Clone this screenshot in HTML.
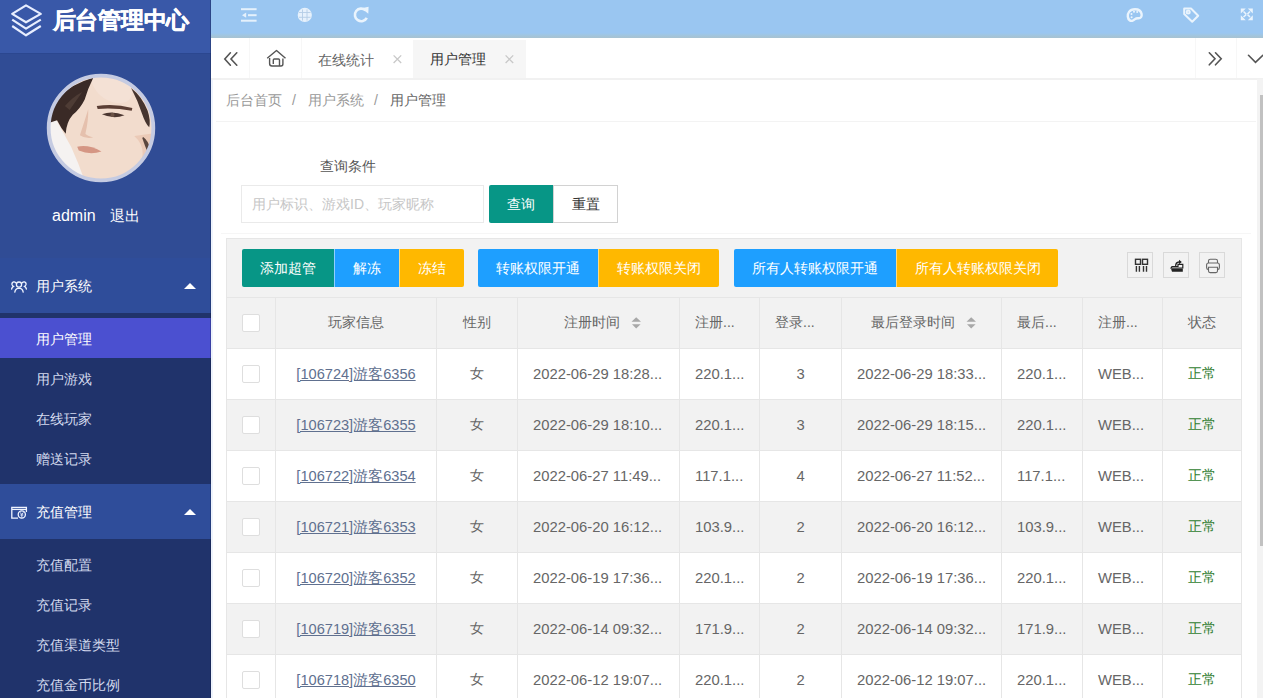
<!DOCTYPE html>
<html><head><meta charset="utf-8">
<style>
*{margin:0;padding:0;box-sizing:border-box}
html,body{width:1263px;height:698px;overflow:hidden;background:#fff;font-family:"Liberation Sans",sans-serif;font-size:14px;color:#666}
.abs{position:absolute}
#side{position:absolute;left:0;top:0;width:211px;height:698px;background:#304c95;overflow:hidden}
#logo{position:absolute;left:0;top:0;width:211px;height:54px;background:#3958a8;border-bottom:1px solid #2b4790}
#logo .t{position:absolute;left:52.5px;top:5px;letter-spacing:-0.25px;-webkit-text-stroke:0.5px #fff;font-size:22.5px;font-weight:bold;color:#fff;line-height:32px;white-space:nowrap}
#avatar{position:absolute;left:46px;top:73px;width:110px;height:110px}
#user{position:absolute;left:52px;top:206px;color:#fff;font-size:15px;line-height:20px;white-space:nowrap}
.grp{position:absolute;left:0;width:211px;height:55px;background:#2f4d9a;color:#fff}
.grp .t{position:absolute;left:36px;top:18px;line-height:20px;font-size:14px}
.grp .tri{position:absolute;left:184px;width:0;height:0;border-left:6px solid transparent;border-right:6px solid transparent;border-bottom:6px solid #fff}
.sub{position:absolute;left:0;width:211px;background:#20336b}
.item{position:absolute;left:0;width:211px;height:40px;color:#d3daee;line-height:42px;padding-left:36px;font-size:14px}
.item.on{background:#4b50d0;color:#fff}
#top{position:absolute;left:211px;top:0;width:1052px;height:38px;background:linear-gradient(to bottom,#9ac6f1 0,#9ac6f1 33px,#a0c6e2 35px,#a6c3d4 37px,#a6c3d4 38px)}
#tabs{position:absolute;left:211px;top:38px;width:1052px;height:42px;background:#fff;border-bottom:2px solid #f1f1f1}
.sep{position:absolute;top:0;width:1px;height:40px;background:#f7f7f7}
#crumb{position:absolute;left:226px;top:90px;line-height:20px;font-size:14px;color:#999;white-space:nowrap}
#crumbline{position:absolute;left:216px;top:121px;width:1040px;height:1px;background:#f3f3f3}
.btn{position:absolute;height:38px;line-height:38px;color:#fff;text-align:center;font-size:14px;white-space:nowrap}
.teal{background:#079686}.blue{background:#1E9FFF}.orange{background:#FFB800}
table{position:absolute;left:226px;top:297px;width:1016px;border-collapse:collapse;table-layout:fixed}
td,th{border:1px solid #e6e6e6;height:51px;font-weight:normal;white-space:nowrap;overflow:hidden;font-size:14px;color:#666;padding:0 15px}
th{background:#f2f2f2}
tr.g td{background:#f2f2f2}
.cb{display:inline-block;width:18px;height:18px;border:1px solid #dedede;border-radius:2px;background:#fff;vertical-align:middle}
.c{text-align:center}
.lnk{color:#60708f;text-decoration:underline;font-size:14.6px}
.num{font-size:14.8px}
.ok{color:#2f7d2f}
.ico{position:absolute;width:26px;height:26px;border:1px solid #d9d9d9;background:#f2f2f2}
#sb{position:absolute;left:1257px;top:79px;width:6px;height:619px;background:#f3f3f3}
#sbt{position:absolute;left:1260px;top:95px;width:3px;height:451px;background:#c1c1c1}
</style></head><body>
<div id="side">
  <div id="logo">
    <svg class="abs" style="left:10px;top:3px" width="34" height="36" viewBox="0 0 34 36" fill="none" stroke="#e8eeff" stroke-width="2.2" stroke-linejoin="round">
      <path d="M2.2 10.9 L16 2.4 L30.8 10.9 L16 19.3 Z"/>
      <path d="M2.2 16.6 L16 25.6 L30.8 16.6"/>
      <path d="M2.2 23 L16 32.3 L30.8 23"/>
    </svg>
    <div class="t">后台管理中心</div>
  </div>
  <div id="avatar"><svg width="110" height="110" viewBox="0 0 698 698">
<defs><clipPath id="cp"><circle cx="349" cy="349" r="335"/></clipPath></defs>
<g clip-path="url(#cp)">
<rect width="698" height="698" fill="#f2dccd"/>
<path d="M280 30 Q420 10 545 90 Q560 200 450 190 Q320 170 280 30 Z" fill="#f5e3d8" opacity="0.7"/>
<path d="M560 400 Q640 470 600 580 Q540 650 420 698 L698 698 L698 380 Z" fill="#ebcab7"/>
<path d="M0 240 L50 270 Q110 380 160 470 Q210 580 250 698 L0 698 Z" fill="#f5f2f1"/>
<path d="M10 320 Q40 220 90 150 Q160 70 300 30 Q265 100 245 170 Q215 230 170 265 Q130 310 125 385 Q95 350 70 300 Z" fill="#3a2a26"/>
<path d="M120 210 Q170 150 230 120 Q195 170 150 235 Z" fill="#4e3c35"/>
<path d="M540 95 Q610 150 645 240 Q665 300 655 345 Q630 320 610 260 Q585 180 540 95 Z" fill="#46352f"/>
<path d="M615 405 Q650 430 665 490 L645 505 Q625 455 612 415 Z" fill="#5a463e"/>
<path d="M322 210 Q430 192 548 222 L544 240 Q430 218 328 228 Z" fill="#5b3e34"/>
<path d="M355 262 Q420 236 498 268 Q430 296 355 262 Z" fill="#4c3731"/>
<circle cx="422" cy="266" r="13" fill="#6b5246"/>
<path d="M268 230 Q240 320 215 395 Q250 420 300 410 Q255 395 250 385 Q270 300 268 230 Z" fill="#e5c0ad"/>
<path d="M198 468 Q270 452 352 498 Q280 522 208 492 Z" fill="#d59684"/>
</g>
<circle cx="349" cy="349" r="332" fill="none" stroke="#c5cbe2" stroke-width="24"/>
</svg></div>
  <div id="user"><span style="font-size:16px">admin</span><span class="abs" style="left:58px;top:0">退出</span></div>

  <div class="grp" style="top:258px">
    <svg class="abs" style="left:0;top:0" width="40" height="55" viewBox="0 258 40 55"><g fill="none" stroke="#f0f4ff" stroke-width="1.3" stroke-linecap="round"><circle cx="19" cy="284.6" r="2.6"/><path d="M14.8 292.2 Q15.5 288.3 19 288.2 Q22.5 288.3 23.2 292.2"/><path d="M15.8 282.7 Q14.8 281.7 13.6 281.9 Q11.6 282.4 12 284.7 Q12.3 286 13.4 286.4 Q12 287.3 11.6 289"/><path d="M22.2 282.7 Q23.2 281.7 24.4 281.9 Q26.4 282.4 26 284.7 Q25.7 286 24.6 286.4 Q26 287.3 26.4 289"/></g></svg>
    <div class="t">用户系统</div><div class="tri" style="top:25px"></div>
  </div>
  <div class="sub" style="top:313px;height:171px">
    <div class="item on" style="top:5px">用户管理</div>
    <div class="item" style="top:45px">用户游戏</div>
    <div class="item" style="top:85px">在线玩家</div>
    <div class="item" style="top:125px">赠送记录</div>
  </div>
  <div class="grp" style="top:484px">
    <svg class="abs" style="left:0;top:0" width="40" height="55" viewBox="0 484 40 55"><g fill="none" stroke="#f0f4ff" stroke-width="1.3"><path d="M18 518.2 H11.8 V507.3 H26.4 V512"/><path d="M12 509.4 H26.3"/><circle cx="21.8" cy="514.4" r="3.6"/><path d="M20.2 512.4 L21.8 514.6 L23.4 512.4 M21.8 514.6 V517 M20.3 515 H23.3" stroke-width="0.9"/></g></svg>
    <div class="t">充值管理</div><div class="tri" style="top:25px"></div>
  </div>
  <div class="sub" style="top:539px;height:170px">
    <div class="item" style="top:5px">充值配置</div>
    <div class="item" style="top:45px">充值记录</div>
    <div class="item" style="top:85px">充值渠道类型</div>
    <div class="item" style="top:125px">充值金币比例</div>
  </div>
</div>

<div class="abs" style="left:209.5px;top:0;width:1.5px;height:698px;background:rgba(10,20,50,0.28)"></div>
<div id="top">
<svg class="abs" style="left:0;top:0" width="1052" height="38" viewBox="211 0 1052 38">
<g fill="#eaf4fd" opacity="0.95">
<rect x="241" y="8.2" width="15.6" height="2"/>
<rect x="248" y="14.2" width="8.6" height="2"/>
<path d="M242 15.2 L246.2 12.6 L246.2 17.8 Z"/>
<rect x="241" y="19.7" width="15.6" height="2"/>
</g>
<g>
<circle cx="304.8" cy="14.9" r="7.1" fill="#e6f1fc"/>
<g stroke="#b4cde6" stroke-width="0.9" fill="none"><path d="M299 12.5 H310.5 M299 17.3 H310.5 M302.5 9.5 V20.5 M307 9.5 V20.5"/></g>
</g>
<g fill="none" stroke="#eaf4fd" stroke-width="2.6">
<path d="M366.8 17.8 A6.3 6.3 0 1 1 365.5 10.3"/>
</g>
<path d="M361.5 8.2 L368.6 6.8 L368.3 13.8 Z" fill="#eaf4fd"/>
<g fill="none" stroke="#eaf4fd" stroke-width="2.4">
<path d="M1135 9.2 C1129 9.2 1127.5 14 1127.8 16.5 C1128.2 20.5 1131 21.5 1133 20.5 C1135 19.5 1135.5 18 1138 18.2 C1141 18.4 1142 16.5 1141.6 14 C1141 10.5 1138.5 9.2 1135 9.2 Z"/>
</g>
<g fill="#eaf4fd"><circle cx="1131.5" cy="14" r="1"/><circle cx="1134" cy="11.8" r="1"/><circle cx="1137.2" cy="12" r="1"/><circle cx="1131.6" cy="17.3" r="1"/></g>
<g fill="none" stroke="#eaf4fd" stroke-width="2" stroke-linejoin="round">
<path d="M1184.2 8.5 L1191 8.5 L1198.2 15.7 L1192.2 21.7 L1184.2 14 Z"/>
<circle cx="1188.2" cy="12.1" r="1.5"/>
</g>
<g fill="none" stroke="#eaf4fd" stroke-width="1.6"><path d="M1243.5 11.5 L1246.3 14.3 M1250 11.5 L1247.5 14 M1243.5 17 L1246.3 14.5 M1250 17 L1247.5 14.5"/></g>
<g fill="#eaf4fd"><path d="M1240.8 8.4 H1245.8 L1240.8 13.4 Z M1252.8 8.4 H1247.8 L1252.8 13.4 Z M1240.8 20.2 H1245.8 L1240.8 15.2 Z M1252.8 20.2 H1247.8 L1252.8 15.2 Z"/></g>
</svg>
</div>
<div id="tabs">
  <div class="sep" style="left:38px"></div>
  <div class="sep" style="left:90px"></div>
  <div class="abs" style="left:202px;top:2px;width:113px;height:38px;background:#f6f6f6"></div>
  <div class="sep" style="left:984px"></div>
  <div class="sep" style="left:1025px"></div>
  <div class="abs" style="left:107px;top:12px;line-height:20px;color:#666">在线统计</div>
<svg class="abs" style="left:0;top:0" width="1052" height="40" viewBox="211 38 1052 40">
<g fill="none" stroke="#555" stroke-width="1.6" stroke-linecap="round" stroke-linejoin="miter">
<path d="M230.4 52.8 L224.8 59 L230.4 65.2 M236.8 52.8 L231 59 L236.8 65.2"/>
<path d="M1209.3 52.8 L1215 58.8 L1209.3 64.8 M1215.5 52.8 L1221.2 58.8 L1215.5 64.8"/>
<path d="M1248.5 55.3 L1255.5 62.3 L1262.8 55.3"/>
</g>
<g fill="none" stroke="#555" stroke-width="1.4" stroke-linejoin="round">
<path d="M267.2 58.3 L276.5 50.5 L285.5 58.3"/>
<path d="M269.6 58 V63.5 Q269.6 66 272 66 H281 Q282.9 66 282.9 64 V58.5"/>
<path d="M273.3 64 V60 Q273.3 59 274.3 59 H278.5 Q279.5 59 279.5 60 V66"/>
</g>
<g stroke="#c8c8c8" stroke-width="1.3"><path d="M393.6 55.4 L401.2 63 M401.2 55.4 L393.6 63"/><path d="M505.6 55.4 L513.2 63 M513.2 55.4 L505.6 63"/></g>
</svg>
  <div class="abs" style="left:219px;top:10.5px;line-height:20px;color:#333">用户管理</div>
</div>

<div id="crumb"><span class="abs" style="left:0">后台首页</span><span class="abs" style="left:66px">/</span><span class="abs" style="left:82px">用户系统</span><span class="abs" style="left:148px">/</span><span class="abs" style="left:164px;color:#666">用户管理</span></div>
<div id="crumbline"></div>
<div class="abs" style="left:221px;top:233px;width:1030px;height:1px;background:#f6f6f6"></div>

<div class="abs" style="left:320px;top:156px;line-height:20px;color:#555">查询条件</div>
<div class="abs" style="left:241px;top:185px;width:243px;height:38px;border:1px solid #eaeaea;line-height:36px;padding-left:10px;color:#c6c6c6;white-space:nowrap">用户标识、游戏ID、玩家昵称</div>
<div class="btn teal" style="left:489px;top:185px;width:64px;border-radius:2px 0 0 2px">查询</div>
<div class="abs" style="left:553px;top:185px;width:65px;height:38px;border:1px solid #d2d2d2;line-height:36px;text-align:center;color:#333">重置</div>

<div class="abs" style="left:226px;top:238px;width:1016px;height:60px;background:#f2f2f2;border:1px solid #e6e6e6"></div>
<div class="btn teal" style="left:242px;top:249px;width:92px;border-radius:2px 0 0 2px">添加超管</div>
<div class="btn blue" style="left:334px;top:249px;width:65px;border-left:1px solid rgba(255,255,255,.5)">解冻</div>
<div class="btn orange" style="left:399px;top:249px;width:65px;border-radius:0 2px 2px 0;border-left:1px solid rgba(255,255,255,.5)">冻结</div>
<div class="btn blue" style="left:478px;top:249px;width:120px;border-radius:2px 0 0 2px">转账权限开通</div>
<div class="btn orange" style="left:598px;top:249px;width:121px;border-radius:0 2px 2px 0;border-left:1px solid rgba(255,255,255,.5)">转账权限关闭</div>
<div class="btn blue" style="left:734px;top:249px;width:162px;border-radius:2px 0 0 2px">所有人转账权限开通</div>
<div class="btn orange" style="left:896px;top:249px;width:162px;border-radius:0 2px 2px 0;border-left:1px solid rgba(255,255,255,.5)">所有人转账权限关闭</div>
<div class="ico" style="left:1127px;top:252px"><svg width="24" height="24" viewBox="1128 253 24 24"><g fill="none" stroke="#333" stroke-width="1.4"><rect x="1135.5" y="259.3" width="5" height="5"/><rect x="1142.5" y="259.3" width="5" height="5"/><path d="M1136.4 266 V271.8 M1139.4 266 V271.8 M1143.5 266 V271.8 M1146.5 266 V271.8"/></g></svg></div>
<div class="ico" style="left:1163px;top:252px"><svg width="24" height="24" viewBox="1164 253 24 24"><g fill="#222"><path d="M1171 268.5 H1182.8 V271.8 H1172 Z"/><path d="M1171 268 L1172 266.5 H1178 V264.3 H1182.8 V268 Z" fill="none" stroke="#222" stroke-width="1.2"/><path d="M1175 266 Q1175 261.5 1179 261.2 L1179 259.8 L1181.8 262 L1179 264.2 L1179 262.8 Q1176.5 263 1176.2 266 Z"/></g></svg></div>
<div class="ico" style="left:1199px;top:252px"><svg width="24" height="24" viewBox="1200 253 24 24"><g fill="none" stroke="#666" stroke-width="1.1"><path d="M1208.5 263 V261 Q1208.5 259.2 1210.3 259.2 H1215.7 Q1217.5 259.2 1217.5 261 V263"/><path d="M1208.3 269.5 Q1206.6 269.5 1206.6 267.5 V265 Q1206.6 263 1208.6 263 H1217.4 Q1219.4 263 1219.4 265 V267.5 Q1219.4 269.5 1217.7 269.5"/><path d="M1208.5 267.3 H1217.5 V271 Q1217.5 272.6 1215.9 272.6 H1210.1 Q1208.5 272.6 1208.5 271 Z"/></g></svg></div>

<table>
<colgroup><col style="width:49px"><col style="width:161px"><col style="width:81px"><col style="width:162px"><col style="width:80px"><col style="width:82px"><col style="width:160px"><col style="width:81px"><col style="width:80px"><col style="width:79px"></colgroup>
<tr><th class="c"><span class="cb"></span></th><th class="c">玩家信息</th><th class="c">性别</th><th style="text-align:left;padding-left:46px"><span style="position:relative">注册时间<svg style="position:absolute;margin-left:11px;margin-top:3px" width="11" height="13" viewBox="0 0 11 13"><path d="M5.2 0.3 L10 4.8 H0.5 Z M1 7.2 H9.6 L5.2 11.6 Z" fill="#a8a8a8"/></svg></span></th><th style="text-align:left">注册...</th><th style="text-align:left">登录...</th><th style="text-align:left;padding-left:29px"><span style="position:relative">最后登录时间<svg style="position:absolute;margin-left:11px;margin-top:3px" width="11" height="13" viewBox="0 0 11 13"><path d="M5.2 0.3 L10 4.8 H0.5 Z M1 7.2 H9.6 L5.2 11.6 Z" fill="#a8a8a8"/></svg></span></th><th style="text-align:left">最后...</th><th style="text-align:left">注册...</th><th class="c">状态</th></tr>
<tr><td class="c"><span class="cb"></span></td><td class="c"><span class="lnk">[106724]游客6356</span></td><td class="c">女</td><td class="num">2022-06-29 18:28...</td><td class="num">220.1...</td><td class="c num">3</td><td class="num">2022-06-29 18:33...</td><td class="num">220.1...</td><td class="num">WEB...</td><td class="c ok">正常</td></tr>
<tr class="g"><td class="c"><span class="cb"></span></td><td class="c"><span class="lnk">[106723]游客6355</span></td><td class="c">女</td><td class="num">2022-06-29 18:10...</td><td class="num">220.1...</td><td class="c num">3</td><td class="num">2022-06-29 18:15...</td><td class="num">220.1...</td><td class="num">WEB...</td><td class="c ok">正常</td></tr>
<tr><td class="c"><span class="cb"></span></td><td class="c"><span class="lnk">[106722]游客6354</span></td><td class="c">女</td><td class="num">2022-06-27 11:49...</td><td class="num">117.1...</td><td class="c num">4</td><td class="num">2022-06-27 11:52...</td><td class="num">117.1...</td><td class="num">WEB...</td><td class="c ok">正常</td></tr>
<tr class="g"><td class="c"><span class="cb"></span></td><td class="c"><span class="lnk">[106721]游客6353</span></td><td class="c">女</td><td class="num">2022-06-20 16:12...</td><td class="num">103.9...</td><td class="c num">2</td><td class="num">2022-06-20 16:12...</td><td class="num">103.9...</td><td class="num">WEB...</td><td class="c ok">正常</td></tr>
<tr><td class="c"><span class="cb"></span></td><td class="c"><span class="lnk">[106720]游客6352</span></td><td class="c">女</td><td class="num">2022-06-19 17:36...</td><td class="num">220.1...</td><td class="c num">2</td><td class="num">2022-06-19 17:36...</td><td class="num">220.1...</td><td class="num">WEB...</td><td class="c ok">正常</td></tr>
<tr class="g"><td class="c"><span class="cb"></span></td><td class="c"><span class="lnk">[106719]游客6351</span></td><td class="c">女</td><td class="num">2022-06-14 09:32...</td><td class="num">171.9...</td><td class="c num">2</td><td class="num">2022-06-14 09:32...</td><td class="num">171.9...</td><td class="num">WEB...</td><td class="c ok">正常</td></tr>
<tr><td class="c"><span class="cb"></span></td><td class="c"><span class="lnk">[106718]游客6350</span></td><td class="c">女</td><td class="num">2022-06-12 19:07...</td><td class="num">220.1...</td><td class="c num">2</td><td class="num">2022-06-12 19:07...</td><td class="num">220.1...</td><td class="num">WEB...</td><td class="c ok">正常</td></tr>
</table>

<div class="abs" style="left:211px;top:80px;width:2px;height:618px;background:#eef3fc"></div>
<div id="sb"></div><div id="sbt"></div>
</body></html>
